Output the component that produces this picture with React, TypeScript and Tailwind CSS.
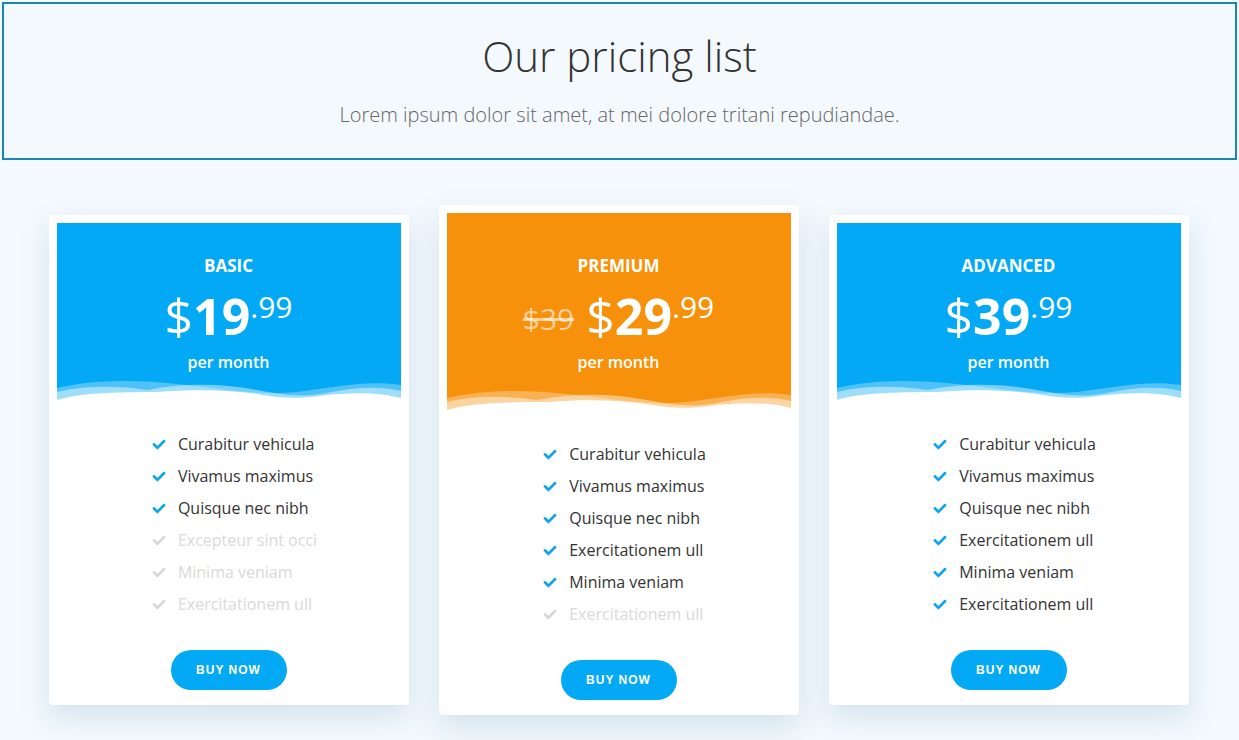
import { FaCheck } from 'react-icons/fa';

interface Plan {
  name: string;
  price: string;
  cents: string;
  oldPrice?: string;
  featured?: boolean;
  features: { label: string; enabled: boolean }[];
}

const plans: Plan[] = [
  {
    name: 'BASIC',
    price: '19',
    cents: '.99',
    features: [
      { label: 'Curabitur vehicula', enabled: true },
      { label: 'Vivamus maximus', enabled: true },
      { label: 'Quisque nec nibh', enabled: true },
      { label: 'Excepteur sint occi', enabled: false },
      { label: 'Minima veniam', enabled: false },
      { label: 'Exercitationem ull', enabled: false },
    ],
  },
  {
    name: 'PREMIUM',
    price: '29',
    cents: '.99',
    oldPrice: '$39',
    featured: true,
    features: [
      { label: 'Curabitur vehicula', enabled: true },
      { label: 'Vivamus maximus', enabled: true },
      { label: 'Quisque nec nibh', enabled: true },
      { label: 'Exercitationem ull', enabled: true },
      { label: 'Minima veniam', enabled: true },
      { label: 'Exercitationem ull', enabled: false },
    ],
  },
  {
    name: 'ADVANCED',
    price: '39',
    cents: '.99',
    features: [
      { label: 'Curabitur vehicula', enabled: true },
      { label: 'Vivamus maximus', enabled: true },
      { label: 'Quisque nec nibh', enabled: true },
      { label: 'Exercitationem ull', enabled: true },
      { label: 'Minima veniam', enabled: true },
      { label: 'Exercitationem ull', enabled: true },
    ],
  },
];

function Wave() {
  return (
    <svg viewBox="0 0 344 28" preserveAspectRatio="none" className="block h-[28px] w-full">
      <path
        d="M0 11 C40 2 80 3 120 7 C160 11 200 19 240 15 C280 10 310 3 344 8 V28 H0Z"
        fill="#ffffff"
        fillOpacity="0.3"
      />
      <path
        d="M0 15 C30 8 60 9 90 13 C120 7 160 5 200 13 C230 19 250 20 270 16 C300 10 322 9 344 14 V28 H0Z"
        fill="#ffffff"
        fillOpacity="0.45"
      />
      <path
        d="M0 23 C20 16 60 15 100 15 C140 12 170 13 200 17 C220 21 240 22 262 19 C292 15 322 15 344 21 V28 H0Z"
        fill="#ffffff"
      />
    </svg>
  );
}

function PlanCard({ plan }: { plan: Plan }) {
  const headerBg = plan.featured ? 'bg-[#f7900a]' : 'bg-[#03a9f4]';
  return (
    <div className="w-[360px] rounded-[4px] bg-white px-2 pt-2 pb-[15px] shadow-[0_12px_30px_rgba(40,110,160,0.16)]">
      <div className={`${headerBg} text-white ${plan.featured ? 'pt-[41px]' : 'pt-[31px]'}`}>
        <div className="text-center text-[17px] font-bold leading-6">{plan.name}</div>
        <div className="mt-[13px] flex h-[48px] items-start justify-center leading-none">
          {plan.oldPrice && (
            <span className="mt-[13px] mr-3 text-[30px] font-normal text-white/60 line-through">
              {plan.oldPrice}
            </span>
          )}
          <span className="text-[50px] font-normal">$</span>
          <span className="text-[50px] font-bold">{plan.price}</span>
          <span className="mt-[1px] text-[30px] font-normal">{plan.cents}</span>
        </div>
        <div className="mt-[11px] text-center text-[16px] font-semibold leading-6">per month</div>
        <div className={plan.featured ? 'mt-[13px]' : 'mt-[3px]'}>
          <Wave />
        </div>
      </div>
      <ul className="mx-auto mt-[23px] w-fit pl-[12px]">
        {plan.features.map((f, i) => (
          <li key={i} className="flex h-8 items-center gap-3 text-[16px]">
            <FaCheck
              className={`h-[13px] w-[14px] ${f.enabled ? 'text-[#0aa5ee]' : 'text-[#d6d6d6]'}`}
            />
            <span className={f.enabled ? 'text-[#333333]' : 'text-[#d9d9d9]'}>{f.label}</span>
          </li>
        ))}
      </ul>
      <div className="mt-[30px] flex justify-center">
        <button className="h-10 w-[116px] rounded-full bg-[#03a9f4] text-[12px] font-bold tracking-[1px] text-white [font-family:'Liberation_Sans',Arial,sans-serif]">
          BUY NOW
        </button>
      </div>
    </div>
  );
}

export default function App() {
  return (
    <div className="min-h-[740px] bg-[#f4f9fd] p-[2px] [font-family:'Open_Sans',sans-serif]">
      <div className="flex h-[158px] flex-col items-center border-2 border-[#1a87b3]">
        <h1 className="mt-[24px] text-[42px] font-light leading-[56px] text-[#333333]">
          Our pricing list
        </h1>
        <p className="mt-[16px] text-[20px] font-light text-[#666666]">
          Lorem ipsum dolor sit amet, at mei dolore tritani repudiandae.
        </p>
      </div>
      <div className="mt-[45px] flex items-center justify-center gap-[30px] pr-[2px]">
        {plans.map((p) => (
          <PlanCard key={p.name} plan={p} />
        ))}
      </div>
    </div>
  );
}
